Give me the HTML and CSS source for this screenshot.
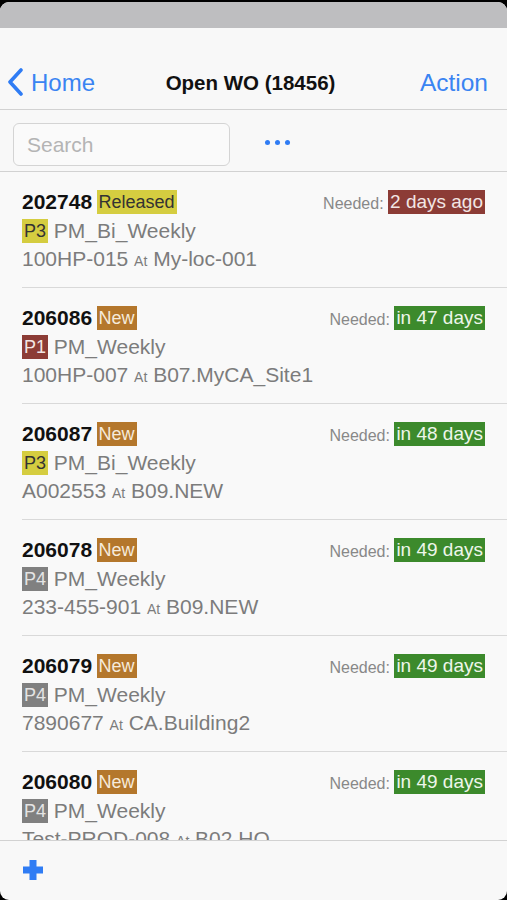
FILE: index.html
```html
<!DOCTYPE html>
<html lang="en">
<head>
    <meta charset="UTF-8">
    <meta name="viewport" content="width=device-width, initial-scale=1.0">
    <title>Open WO</title>
    <link rel="stylesheet" href="styles.css">
</head>
<body>
<div class="screen">
    <div class="status"></div>

    <div class="nav">
        <a class="back">
            <svg width="18" height="28" viewBox="0 0 18 28"><polyline points="15,2 4,14 15,26" fill="none" stroke="#2f7cf4" stroke-width="3.6" stroke-linecap="round" stroke-linejoin="round"/></svg>
            Home
        </a>
        <div class="title">Open WO (18456)</div>
        <a class="action">Action</a>
    </div>

    <div class="searchbar">
        <div class="search">Search</div>
        <div class="dots"><span></span><span></span><span></span></div>
    </div>

    <div class="list">
        <div class="row">
            <div class="line1">
                <div><b class="wo">202748</b> <span class="tag released">Released</span></div>
                <div class="need">Needed: <span class="tag late">2 days ago</span></div>
            </div>
            <div class="line2"><span class="tag p3">P3</span> PM_Bi_Weekly</div>
            <div class="line3">100HP-015 <small>At</small> My-loc-001</div>
        </div>
        <div class="row">
            <div class="line1">
                <div><b class="wo">206086</b> <span class="tag new">New</span></div>
                <div class="need">Needed: <span class="tag ok">in 47 days</span></div>
            </div>
            <div class="line2"><span class="tag p1">P1</span> PM_Weekly</div>
            <div class="line3">100HP-007 <small>At</small> B07.MyCA_Site1</div>
        </div>
        <div class="row">
            <div class="line1">
                <div><b class="wo">206087</b> <span class="tag new">New</span></div>
                <div class="need">Needed: <span class="tag ok">in 48 days</span></div>
            </div>
            <div class="line2"><span class="tag p3">P3</span> PM_Bi_Weekly</div>
            <div class="line3">A002553 <small>At</small> B09.NEW</div>
        </div>
        <div class="row">
            <div class="line1">
                <div><b class="wo">206078</b> <span class="tag new">New</span></div>
                <div class="need">Needed: <span class="tag ok">in 49 days</span></div>
            </div>
            <div class="line2"><span class="tag p4">P4</span> PM_Weekly</div>
            <div class="line3">233-455-901 <small>At</small> B09.NEW</div>
        </div>
        <div class="row">
            <div class="line1">
                <div><b class="wo">206079</b> <span class="tag new">New</span></div>
                <div class="need">Needed: <span class="tag ok">in 49 days</span></div>
            </div>
            <div class="line2"><span class="tag p4">P4</span> PM_Weekly</div>
            <div class="line3">7890677 <small>At</small> CA.Building2</div>
        </div>
        <div class="row">
            <div class="line1">
                <div><b class="wo">206080</b> <span class="tag new">New</span></div>
                <div class="need">Needed: <span class="tag ok">in 49 days</span></div>
            </div>
            <div class="line2"><span class="tag p4">P4</span> PM_Weekly</div>
            <div class="line3">Test-PROD-008 <small>At</small> B02.HQ</div>
        </div>
    </div>

    <div class="footer">
        <svg width="22" height="22" viewBox="0 0 22 22"><path d="M11 1 V21 M1 11 H21" stroke="#2f7cf4" stroke-width="7"/></svg>
    </div>
</div>
</body>
</html>
```

FILE: styles.css
```css
* { box-sizing: border-box; }
body { margin: 0; background: #000; font-family: "Liberation Sans", Arial, sans-serif; }
.screen { margin-top: 2px; height: 898px; background: #f8f8f8; border-radius: 9px; overflow: hidden; display: flex; flex-direction: column; }
.status { height: 26px; background: #bebec0; flex: none; }

.nav { height: 82px; border-bottom: 1px solid #d2d2d2; display: grid; grid-template-columns: 1fr auto 1fr; align-items: end; padding: 0 19px 12px 6px; flex: none; }
.back { display: flex; align-items: center; gap: 7px; color: #3a84f2; font-size: 24px; }
.back svg { margin-top: -2px; }
.title { font-size: 20.5px; font-weight: bold; color: #111; padding-bottom: 2px; margin-left: 7px; }
.action { justify-self: end; color: #3a84f2; font-size: 24.5px; }

.searchbar { height: 62px; border-bottom: 1px solid #d2d2d2; display: flex; align-items: flex-start; padding: 13px 13px 0; gap: 35px; flex: none; }
.search { width: 217px; height: 43px; border: 1px solid #d4d4d4; border-radius: 6px; background: #fafafa; color: #b4b4b4; font-size: 21px; line-height: 41px; padding-left: 13px; }
.dots { display: flex; gap: 5px; margin-top: 17px; }
.dots span { width: 5px; height: 5px; border-radius: 50%; background: #2f7cf4; }

.list { flex: 1; overflow: hidden; background: #f9f9f9; }
.row { margin-left: 22px; padding: 15px 22px 14px 0; border-bottom: 1px solid #d9d9d9; }
.line1 { display: flex; justify-content: space-between; align-items: center; height: 30px; }
.wo { font-size: 21px; color: #111; }
.need { color: #888; font-size: 16px; }
.line2, .line3 { height: 28px; line-height: 28px; font-size: 21px; color: #7c7c7c; white-space: nowrap; }
.line3 small { font-size: 14px; }

.tag { display: inline-block; font-size: 18px; line-height: 24px; padding: 0 2px; vertical-align: 1px; }
.need .tag { font-size: 19px; }
.released { background: #d5cd40; color: #333; }
.new { background: #b4772c; color: #f6eadb; }
.late { background: #8c3c36; color: #f2e6e4; }
.ok { background: #3c8a2c; color: #eef6ea; }
.p1 { background: #8c3c36; color: #f2e6e4; }
.p3 { background: #d5cd40; color: #333; }
.p4 { background: #808080; color: #e4e4e4; }

.footer { height: 60px; border-top: 1px solid #d2d2d2; display: flex; align-items: center; padding-left: 22px; flex: none; }
.footer svg { margin-bottom: 2px; }
```
